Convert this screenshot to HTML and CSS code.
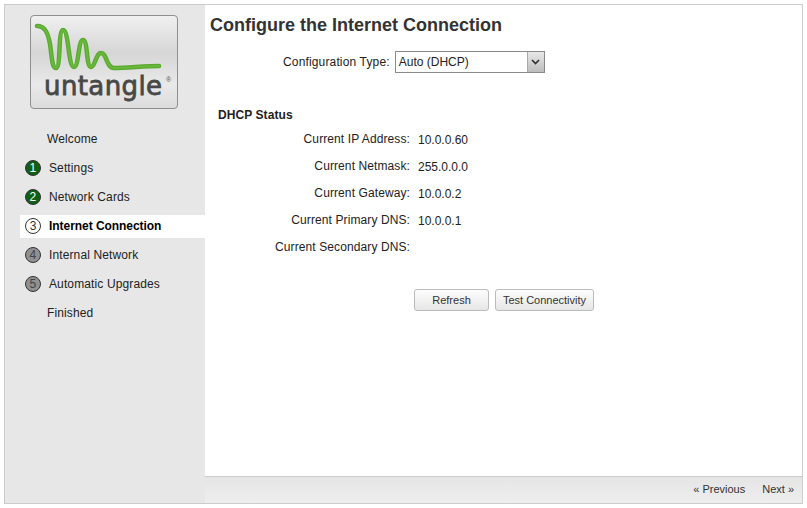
FILE: index.html
```html
<!DOCTYPE html>
<html lang="en">
<head>
    <meta charset="UTF-8">
    <title>Untangle Setup Wizard</title>
    <link rel="stylesheet" href="styles.css">
</head>
<body>

    <div class="wizard">
        <aside class="sidebar">
            <div class="logo">
                <svg class="logo-wave" width="146" height="92" viewBox="0 0 146 92">
                    <path d="M6 10 C14 10 17 17 19 28 C21 42 21 52 25 52 C30 52 27 14 32 14 C38 14 37 51 43 51 C48 51 47 24 52 24 C57 24 55 51 60 51 C64 51 65 37 70 37 C76 37 75 52 83 52 C95 52 115 50 128 50" fill="none" stroke="#5aaa30" stroke-width="4.5" stroke-linecap="round"/>
                    <path d="M6 10 C14 10 17 17 19 28 C21 42 21 52 25 52 C30 52 27 14 32 14 C38 14 37 51 43 51 C48 51 47 24 52 24 C57 24 55 51 60 51 C64 51 65 37 70 37 C76 37 75 52 83 52 C95 52 115 50 128 50" fill="none" stroke="#69b83c" stroke-width="2" stroke-linecap="round"/>
                </svg>
                <span class="logo-text">untangle</span>
                <span class="logo-reg">®</span>
            </div>

            <ul class="steps">
                <li class="step plain">Welcome</li>
                <li class="step done"><span class="num">1</span>Settings</li>
                <li class="step done"><span class="num">2</span>Network Cards</li>
                <li class="step active"><span class="num">3</span>Internet Connection</li>
                <li class="step todo"><span class="num">4</span>Internal Network</li>
                <li class="step todo"><span class="num">5</span>Automatic Upgrades</li>
                <li class="step plain">Finished</li>
            </ul>
        </aside>

        <div class="panel">
            <main class="content">
                <h1>Configure the Internet Connection</h1>

                <div class="config-row">
                    <label class="config-label">Configuration Type:</label>
                    <div class="select">
                        <span class="select-value">Auto (DHCP)</span>
                        <span class="select-arrow">
                            <svg width="9" height="6" viewBox="0 0 9 6"><path d="M1 1 L4.5 4.5 L8 1" fill="none" stroke="#333" stroke-width="1.7"/></svg>
                        </span>
                    </div>
                </div>

                <h2>DHCP Status</h2>

                <div class="status">
                    <span class="status-label">Current IP Address:</span><span class="status-value">10.0.0.60</span>
                    <span class="status-label">Current Netmask:</span><span class="status-value">255.0.0.0</span>
                    <span class="status-label">Current Gateway:</span><span class="status-value">10.0.0.2</span>
                    <span class="status-label">Current Primary DNS:</span><span class="status-value">10.0.0.1</span>
                    <span class="status-label">Current Secondary DNS:</span><span class="status-value"></span>
                </div>

                <div class="actions">
                    <button class="btn btn-refresh">Refresh</button>
                    <button class="btn btn-test">Test Connectivity</button>
                </div>
            </main>

            <footer class="footer">
                <a href="#">« Previous</a>
                <a href="#">Next »</a>
            </footer>
        </div>
    </div>

</body>
</html>
```

FILE: styles.css
```css
html, body {
    height: 100%;
}

body {
    margin: 0;
    padding: 4px;
    box-sizing: border-box;
    background: white;
    color: #222;
    font-family: "Liberation Sans", Arial, sans-serif;
    font-size: 12px;
    overflow: hidden;
}

.wizard {
    display: flex;
    width: 799px;
    height: 500px;
    box-sizing: border-box;
    border: 1px solid #ccc;
}

/* Sidebar */
.sidebar {
    width: 200px;
    flex-shrink: 0;
    background: #e7e7e7;
}

.logo {
    position: relative;
    width: 148px;
    height: 94px;
    box-sizing: border-box;
    margin: 10px 0 0 25px;
    border: 1px solid #8f8f8f;
    border-radius: 4px;
    background: linear-gradient(to bottom, #f0f0f0, #d6d6d6 40%, #e9e9e9 75%, #dcdcdc);
}

.logo-wave {
    position: absolute;
    top: 0;
    left: 0;
}

.logo-text {
    position: absolute;
    top: 55px;
    left: 13px;
    font-family: "DejaVu Sans", sans-serif;
    font-size: 26px;
    line-height: 30px;
    letter-spacing: 0.4px;
    color: #484848;
    -webkit-text-stroke: 0.8px #484848;
}

.logo-reg {
    position: absolute;
    top: 60px;
    left: 135px;
    font-size: 7px;
    color: #555;
}

.steps {
    display: flex;
    flex-direction: column;
    list-style: none;
    margin: 18px 0 0;
    padding: 0;
}

.step {
    display: flex;
    align-items: center;
    height: 23px;
    margin: 0 0 6px 15px;
    padding-left: 5px;
    color: #222;
    letter-spacing: 0.12px;
}

.step.plain {
    padding-left: 27px;
}

.step.active {
    box-sizing: border-box;
    margin-top: 1px;
    margin-bottom: 5px;
    padding-bottom: 2px;
    background: white;
    color: black;
    font-weight: bold;
    letter-spacing: -0.05px;
}

.num {
    width: 16px;
    height: 16px;
    box-sizing: border-box;
    margin-right: 8px;
    border: 1px solid #333;
    border-radius: 50%;
    font-size: 12px;
    font-weight: normal;
    line-height: 14px;
    text-align: center;
}

.done .num {
    background: #0f5f14;
    color: white;
}

.active .num {
    background: white;
    color: #333;
}

.todo .num {
    background: #909090;
    color: #444;
}

/* Main panel */
.panel {
    flex: 1;
    display: flex;
    flex-direction: column;
    background: white;
}

.content {
    flex: 1;
    padding: 10px 5px 0;
}

h1 {
    margin: 0;
    font-size: 18px;
    line-height: 21px;
    color: #333;
}

.config-row {
    display: flex;
    align-items: center;
    margin-top: 15px;
    margin-left: 73px;
}

.config-label {
    margin-right: 5px;
    letter-spacing: 0.15px;
}

.select {
    display: flex;
    width: 150px;
    height: 22px;
    box-sizing: border-box;
    border: 1px solid #8a8a8a;
}

.select-value {
    flex: 1;
    padding-left: 3px;
    line-height: 21px;
}

.select-arrow {
    display: flex;
    align-items: center;
    justify-content: center;
    width: 16px;
    background: linear-gradient(to bottom, #e8e8e8, #bdbdbd);
    border-left: 1px solid #aaa;
}

h2 {
    margin: 35px 0 0 8px;
    font-size: 12px;
    line-height: 14px;
    color: #222;
    letter-spacing: 0.08px;
}

.status {
    display: grid;
    grid-template-columns: 200px auto;
    column-gap: 8px;
    row-gap: 13px;
    margin-top: 10px;
    line-height: 14px;
}

.status-label {
    text-align: right;
    letter-spacing: 0.1px;
}

.status-value {
    position: relative;
    top: 1px;
}

.actions {
    display: flex;
    gap: 6px;
    margin-top: 35px;
    margin-left: 204px;
}

.btn {
    height: 22px;
    padding: 0;
    box-sizing: border-box;
    border: 1px solid #bbb;
    border-radius: 3px;
    background: linear-gradient(to bottom, #fdfdfd, #e6e6e6);
    color: #333;
    font-family: "Liberation Sans", Arial, sans-serif;
    font-size: 11px;
}

.btn-refresh {
    width: 75px;
}

.btn-test {
    width: 99px;
}

.footer {
    display: flex;
    justify-content: flex-end;
    align-items: center;
    gap: 17px;
    height: 27px;
    box-sizing: border-box;
    padding: 0 8px 2px 0;
    border-top: 1px solid #ccc;
    background: linear-gradient(to bottom, #e5e5e5, #eeeeee);
    font-size: 11px;
}

.footer a {
    color: #333;
    text-decoration: none;
}
```
